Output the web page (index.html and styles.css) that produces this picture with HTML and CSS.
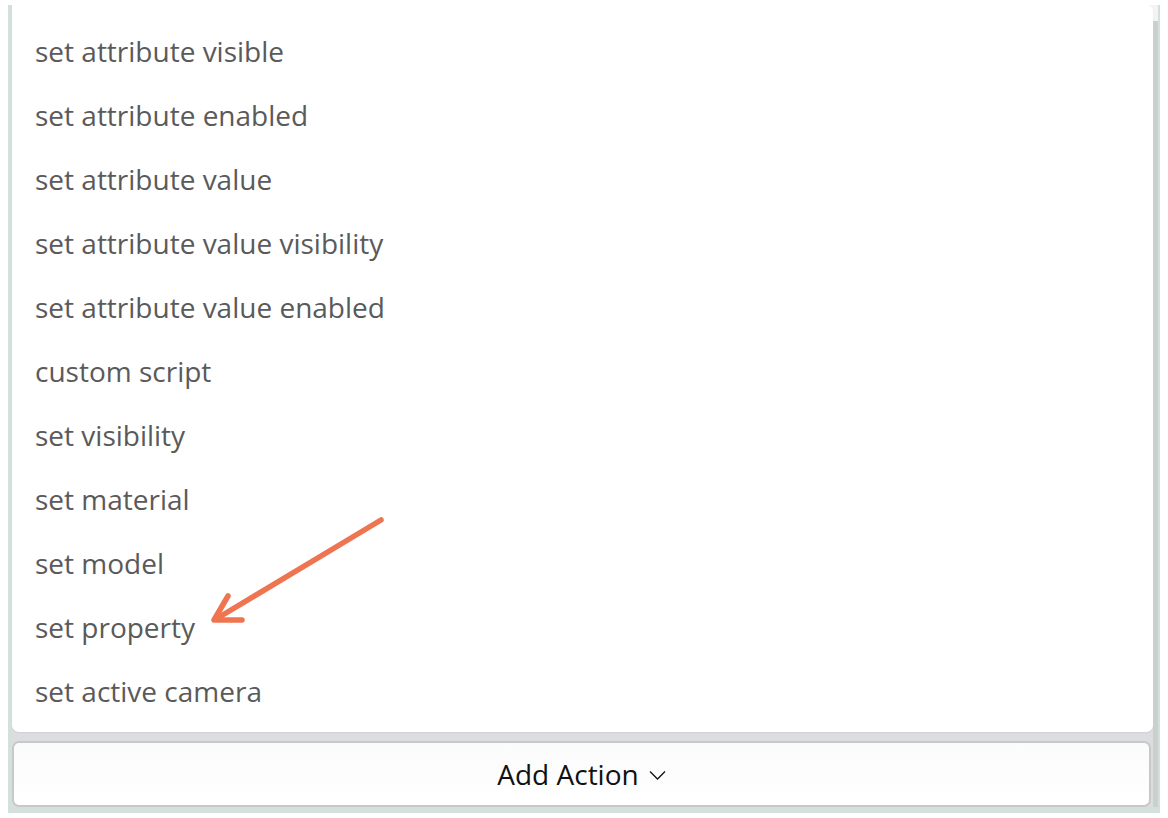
FILE: index.html
```html
<!DOCTYPE html>
<html lang="en">
<head>
    <meta charset="UTF-8">
    <title>Add Action</title>
    <link rel="stylesheet" href="styles.css">
</head>
<body>
    <div class="frame">
        <div class="tabs">
            <div class="tab"></div>
            <div class="tab light"></div>
        </div>
        <div class="content">
            <div class="main">
                <ul class="menu">
                    <li>set attribute visible</li>
                    <li>set attribute enabled</li>
                    <li>set attribute value</li>
                    <li>set attribute value visibility</li>
                    <li>set attribute value enabled</li>
                    <li>custom script</li>
                    <li>set visibility</li>
                    <li>set material</li>
                    <li>set model</li>
                    <li>set property</li>
                    <li>set active camera</li>
                </ul>
                <button class="add-btn">Add Action
                    <svg class="chevron" width="17" height="11" viewBox="0 0 17 11"><path d="M1 1.5 L8.5 9 L16 1.5" fill="none" stroke="#111" stroke-width="1.3"/></svg>
                </button>
            </div>
            <div class="scroll"></div>
        </div>
    </div>

    <svg class="arrow" width="200" height="130" viewBox="0 0 200 130">
        <g fill="none" stroke="#ef7550" stroke-width="5.5" stroke-linecap="round" stroke-linejoin="round">
            <path d="M181 20 L16 119"/>
            <path d="M28 96 L14 120 L42 120"/>
        </g>
    </svg>
</body>
</html>
```

FILE: styles.css
```css
body {
    margin: 0;
    background: #fff;
    font-family: "Open Sans", "Noto Sans", sans-serif;
}
.frame {
    position: relative;
    box-sizing: border-box;
    width: 1152px;
    height: 808px;
    margin: 5px 0 0 8px;
    padding: 0 2px 7px 4px;
    background: #d4e0dc;
    display: flex;
    flex-direction: column;
}
.tabs {
    height: 6px;
    display: flex;
    gap: 9px;
    padding-left: 102px;
}
.tab {
    width: 260px;
    background: #bcc6c4;
}
.tab.light {
    background: #c9d5d1;
}
.content {
    flex: 1;
    display: flex;
    background: #f3f3f3;
}
.main {
    flex: 1;
    display: flex;
    flex-direction: column;
    gap: 9px;
    background: linear-gradient(#f3f3f3 90%, #dcdde0 90%);
}
.scroll {
    width: 5px;
    margin-top: 16px;
    background: #c9d0ce;
}
.menu {
    list-style: none;
    margin: 0;
    padding: 14px 0 9px;
    background: #fff;
    border-radius: 0 6px 7px 7px;
    box-shadow: 0 1px 2px rgba(0, 0, 0, 0.06);
}
.menu li {
    height: 64px;
    line-height: 64px;
    padding-left: 23px;
    font-size: 28px;
    color: #5a5a5a;
}
.add-btn {
    box-sizing: border-box;
    height: 66px;
    margin-right: 2px;
    border: 2px solid #c8c8c8;
    border-radius: 7px;
    background: linear-gradient(#fbfbfb, #fff);
    font-family: inherit;
    font-size: 28px;
    color: #111;
    display: flex;
    align-items: center;
    justify-content: center;
    gap: 10px;
    padding: 0;
}
.chevron {
    margin-top: 2px;
}
.arrow {
    position: absolute;
    left: 200px;
    top: 500px;
}
```
